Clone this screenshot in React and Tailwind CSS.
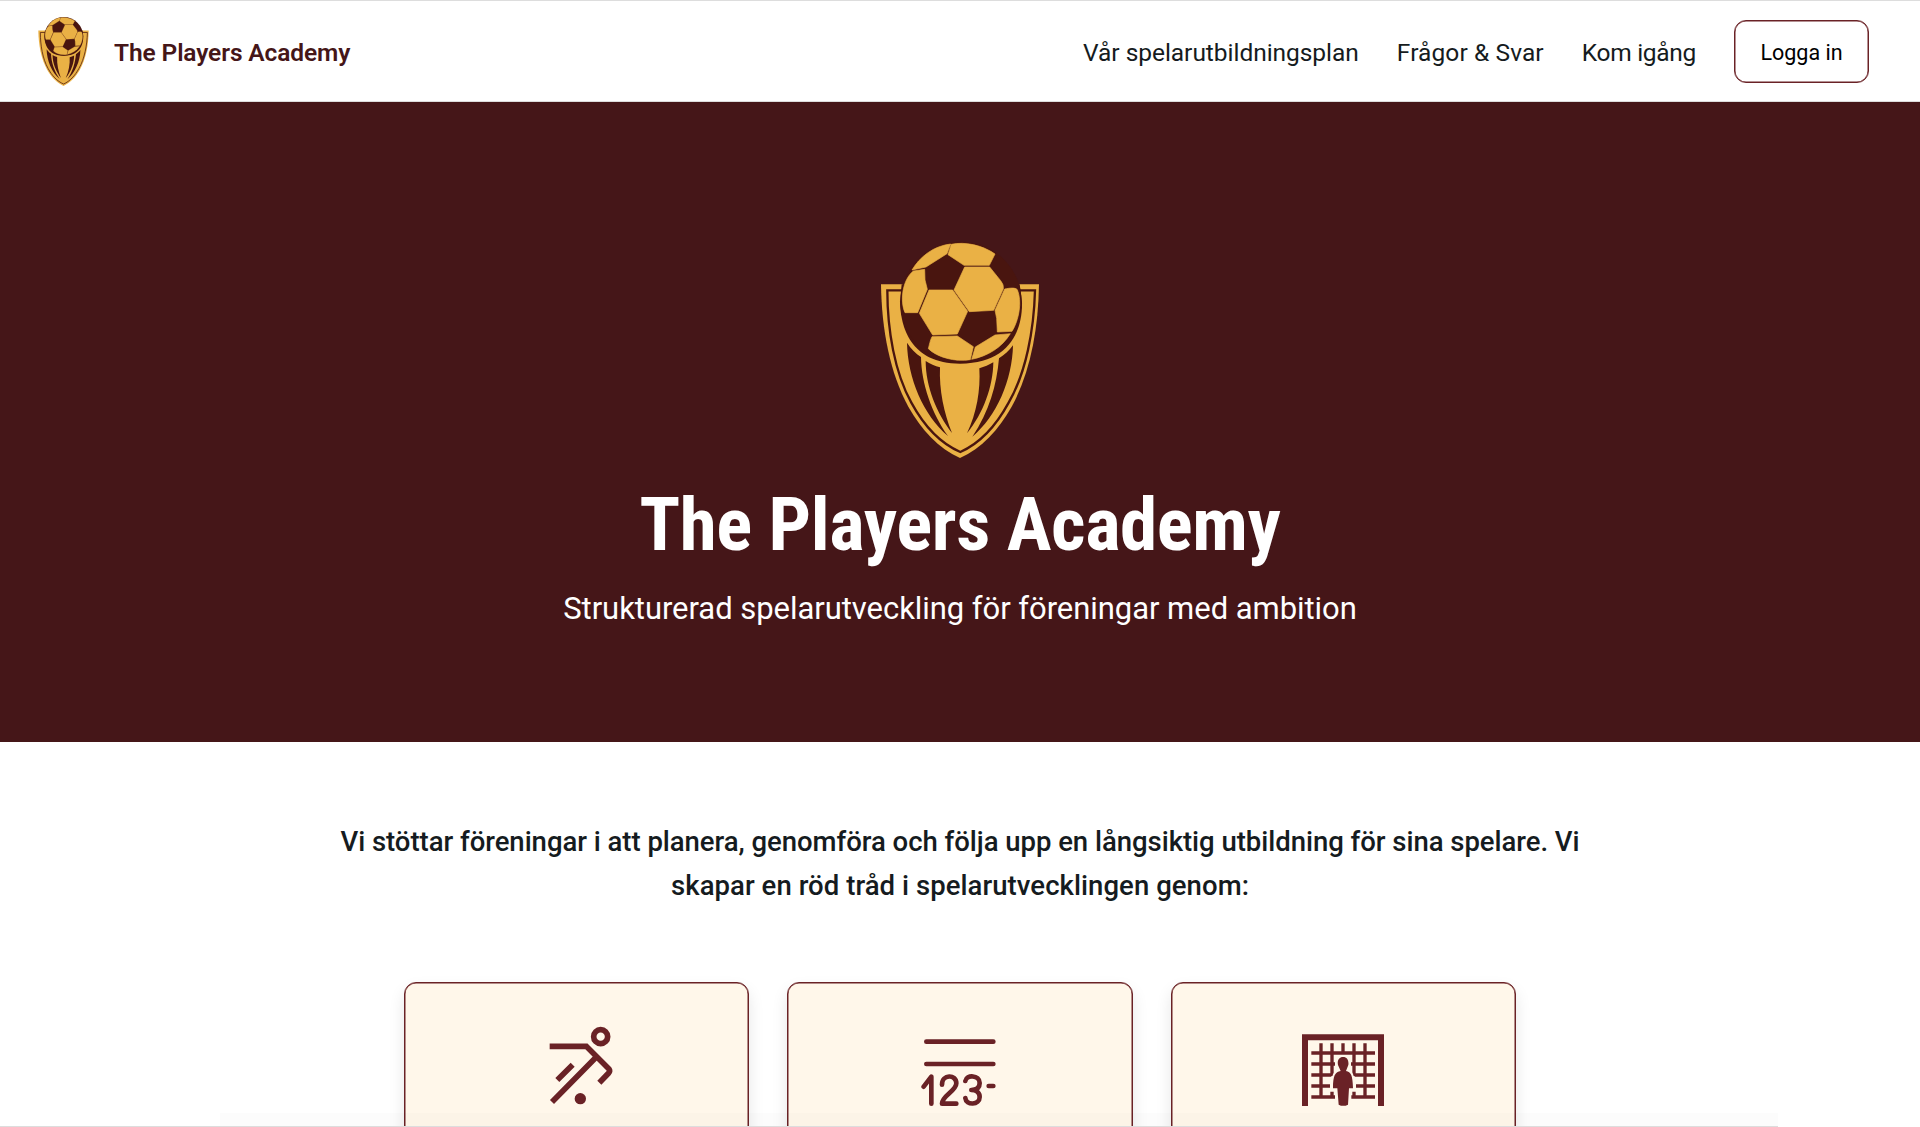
function Crest({ className }) {
  return (
    <svg className={className} viewBox="60 34 480 652" aria-hidden="true">
      <path d="M63 163H537C535 300 510 430 455 530C415 600 365 655 300 684C235 655 185 600 145 530C90 430 65 300 63 163Z" fill="#eab145" />
      <path d="M82 181H525C522 300 498 428 446 518C408 588 360 640 301 666C240 640 192 588 154 518C104 428 82 300 82 181Z" fill="none" stroke="#49150f" strokeWidth="7" />
      <path d="M125 163L120 215C122 290 150 400 300 401C450 400 488 300 486 215L479 163Z" fill="#49150f" />
      <circle cx="303" cy="217" r="182" fill="#49150f" />
      <g fill="#eab145" stroke="#eab145" strokeWidth="2" strokeLinejoin="round">
        <path d="M156 120C180 80 220 48 272 42L261 71L198 111Z" />
        <path d="M274 43C315 34 368 46 405 72L388 106L312 106L264 74Z" />
        <path d="M160 123L194 118L195 150L202 178L173 248L135 248C120 215 126 150 160 123Z" />
        <path d="M314 111H389L422 152Q432 164 430 177L401 241L328 245L282 180Z" />
        <path d="M207 180H278L323 244L292 312L218 315L178 250Z" />
        <path d="M434 177C450 174 465 172 472 179C487 215 477 270 456 304L412 306L410 265L405 241Z" />
        <path d="M216 320L292 318L340 350L331 389C285 397 230 381 205 356C208 345 210 332 216 320Z" />
        <path d="M346 351L405 315L451 311C425 353 383 378 335 388Z" />
      </g>
      <g fill="#49150f">
        <path d="M141 338C152 355 167 371 183 381C184 460 215 550 264 618C190 555 143 445 141 338Z" />
        <path d="M197 393C210 402 225 408 240 412C237 480 252 550 276 609C230 550 197 470 197 393Z" />
        <path d="M459 346C448 361 433 375 417 385C410 465 388 545 337 620C410 560 457 450 459 346Z" />
        <path d="M400 397C387 405 373 410 358 415C362 480 350 550 321 610C370 550 399 470 400 397Z" />
      </g>
    </svg>
  );
}

function KickIcon() {
  return (
    <svg className="ml-[10px] h-[80px] w-[66px]" viewBox="476 198 198 240" fill="none" stroke="#6a2226" strokeWidth="17" aria-hidden="true">
      <circle cx="631" cy="230" r="21" />
      <path d="M478 259H588L656 327Q660 333 655 339L627 368M615 294L485 426M547 314L501 360" />
      <circle cx="570" cy="416" r="17" fill="#6a2226" stroke="none" />
    </svg>
  );
}

function PlanIcon() {
  return (
    <svg className="mr-[2px] h-[72px] w-[76px]" viewBox="424 230 228 216" fill="none" stroke="#6a2226" strokeWidth="14" strokeLinecap="round" strokeLinejoin="round" aria-hidden="true">
      <path d="M440 244H641M440 311H641M627 377H641" />
      <path d="M432 379L455 349V430M487 373C487 341 530 341 530 369C530 392 487 406 487 430H530M557 362C560 342 600 344 600 368C600 384 590 389 575 389C590 389 600 397 600 410C600 435 559 436 557 413" />
    </svg>
  );
}

function GoalIcon() {
  return (
    <svg className="h-[72px] w-[82px]" viewBox="426 224 246 216" fill="none" stroke="#6a2226" aria-hidden="true">
      <path d="M435 440V234H663V440" strokeWidth="18" />
      <path d="M454 281H645M454 314H525M573 314H645M454 347H514M584 347H645M454 380H510M588 380H645M454 413H525M574 413H645M483 252V413M516 252V350M516 397V413M549 252V284M582 252V350M582 397V413M615 252V413" strokeWidth="10" />
      <path d="M549 293C562 293 567 304 565 317L558 335C573 338 578 347 579 387H567L564 436Q550 443 536 436L532 387H519C519 347 526 338 542 335L534 317C531 304 537 293 549 293Z" fill="#6a2226" stroke="#fff7ea" strokeWidth="12" paintOrder="stroke" />
    </svg>
  );
}

const links = [
  { label: "Vår spelarutbildningsplan", tracking: "tracking-[-0.04px]" },
  { label: "Frågor & Svar", tracking: "tracking-[0.1px]" },
  { label: "Kom igång", tracking: "tracking-[-0.3px]" },
];

const cards = [
  { name: "kick", icon: <KickIcon />, offset: "pt-[43px]" },
  { name: "plan", icon: <PlanIcon />, offset: "pt-[54px]" },
  { name: "goal", icon: <GoalIcon />, offset: "pt-[51px]" },
];

export default function App() {
  return (
    <div className="relative flex h-[1127px] flex-col overflow-hidden bg-white font-['Roboto',sans-serif] text-[#151b20]">
      <header className="flex h-[102px] shrink-0 items-center justify-between border-t border-b border-t-[#dddddd] border-b-[#dddddd] pr-[51px] pl-[38px]">
        <div className="flex items-center gap-[25px]">
          <Crest className="h-[71px] w-[51px]" />
          <span className="pt-[5px] text-[24.5px] leading-none font-semibold tracking-[-0.12px] text-[#451618]">The Players Academy</span>
        </div>
        <nav className="flex items-center gap-[38px]">
          {links.map(({ label, tracking }) => (
            <a key={label} className={`pt-[5px] text-[24.5px] leading-none ${tracking}`}>{label}</a>
          ))}
          <button className="h-[63px] w-[135px] rounded-[12px] border border-[#6a2226] pt-[3px] text-[21.5px] leading-none text-black shadow-[inset_0_0_0_0.5px_#6a2226]">Logga in</button>
        </nav>
      </header>

      <section className="flex h-[640px] shrink-0 flex-col items-center bg-[#451618] pt-[139px] text-white">
        <Crest className="h-[218px] w-[160px]" />
        <h1 className="mt-[23px] text-[75px] leading-[84px] font-bold tracking-[-0.4px] font-stretch-[87.5%]">The Players Academy</h1>
        <p className="mt-[23px] text-[31px] leading-[40px] tracking-[-0.05px]">Strukturerad spelarutveckling för föreningar med ambition</p>
      </section>

      <section className="flex flex-col items-center">
        <p className="mt-[78px] text-center text-[27.5px] leading-[44px] font-medium whitespace-nowrap">
          <span className="block tracking-[-0.03px]">Vi stöttar föreningar i att planera, genomföra och följa upp en långsiktig utbildning för sina spelare. Vi</span>
          <span className="block tracking-[0.06px]">skapar en röd tråd i spelarutvecklingen genom:</span>
        </p>
        <div className="mt-[74px] grid w-[1112px] grid-cols-3 gap-[38.4px]">
          {cards.map(({ name, icon, offset }) => (
            <article key={name} className={`flex h-[300px] justify-center rounded-[12px] border border-[#6a2226] bg-[#fff7ea] shadow-[0_8px_16px_rgba(0,0,0,0.1),inset_0_0_0_0.5px_#6a2226] ${offset}`}>
              {icon}
            </article>
          ))}
        </div>
      </section>

      <div className="absolute bottom-0 left-0 h-px w-[1778px] bg-[#dddddd]" />
      <div className="absolute bottom-px left-[220px] h-[13px] w-[1558px] bg-black/1" />
    </div>
  );
}
